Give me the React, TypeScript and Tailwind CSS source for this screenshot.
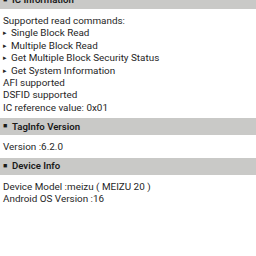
type Line = { text: string; bullet?: boolean };

const sections: { title: string; lines: Line[] }[] = [
  {
    title: "IC Information",
    lines: [
      { text: "Supported read commands:" },
      { text: "Single Block Read", bullet: true },
      { text: "Multiple Block Read", bullet: true },
      { text: "Get Multiple Block Security Status", bullet: true },
      { text: "Get System Information", bullet: true },
      { text: "AFI supported" },
      { text: "DSFID supported" },
      { text: "IC reference value: 0x01" },
    ],
  },
  { title: "TagInfo Version", lines: [{ text: "Version :6.2.0" }] },
  {
    title: "Device Info",
    lines: [{ text: "Device Model :meizu ( MEIZU 20 )" }, { text: "Android OS Version :16" }],
  },
];

function Section({ title, lines }: { title: string; lines: Line[] }) {
  return (
    <section>
      <div className="flex h-[17px] items-center bg-[#c9c9c7] pl-[3px] text-[9.6px] font-semibold text-[#1a1a1a]">
        <span className="w-[9px] text-[7px] leading-none">■</span>
        <span>{title}</span>
      </div>
      <div className="pb-[4px] pl-[3px] pt-[6px] text-[9.9px] leading-[12.4px] text-[#262626]">
        {lines.map((l) => (
          <div key={l.text} className="flex whitespace-nowrap">
            {l.bullet && <span className="w-[8px] text-[7px]">▸</span>}
            <span>{l.text}</span>
          </div>
        ))}
      </div>
    </section>
  );
}

export default function App() {
  return (
    <div className="h-[256px] w-[256px] overflow-hidden bg-white font-['Roboto',sans-serif]">
      <div className="-mt-[8px]">
        {sections.map((s) => (
          <Section key={s.title} {...s} />
        ))}
      </div>
    </div>
  );
}
